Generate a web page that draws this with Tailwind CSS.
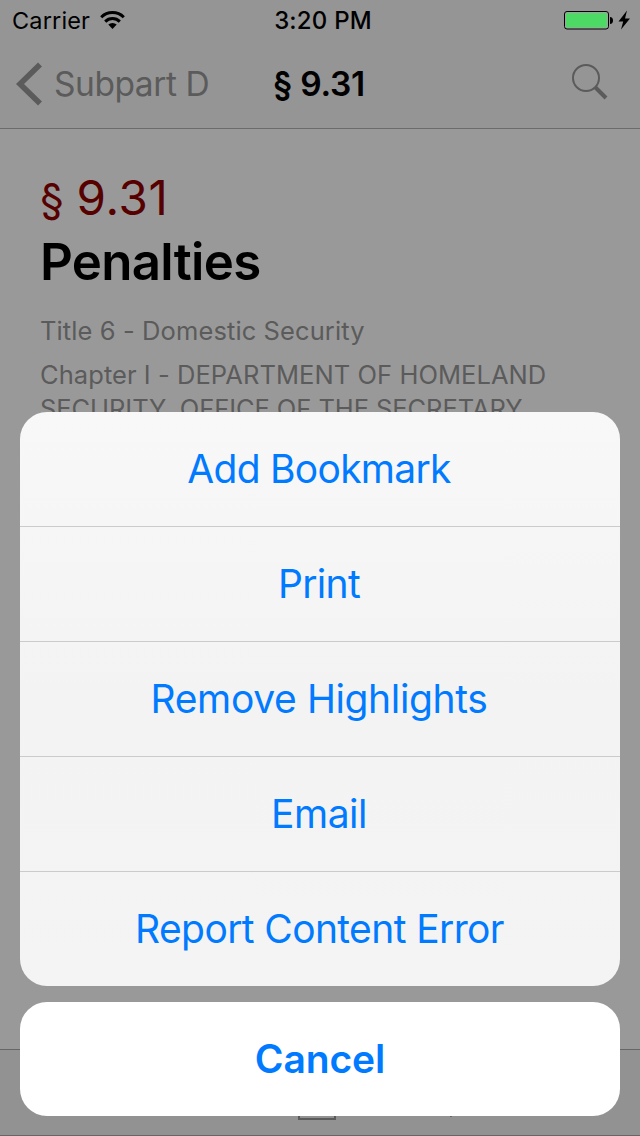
<!DOCTYPE html>
<html lang="en">
<head>
    <meta charset="UTF-8">
    <meta name="viewport" content="width=device-width, initial-scale=1.0">
    <title>§ 9.31 Penalties</title>
    <!-- Tailwind CSS -->
    <script src="https://cdn.jsdelivr.net/npm/@tailwindcss/browser@4"></script>
    <style>
        body {
            font-family: 'Inter', 'Liberation Sans', sans-serif;
        }
    </style>
</head>
<body class="bg-[#999999] overflow-hidden">
    <div class="relative w-[640px] h-[1136px] overflow-hidden flex flex-col">
        <!-- Status bar and navigation -->
        <header class="bg-[#959595] border-b border-[#6b6b6b] h-[129px] shrink-0">
            <div class="h-10 grid grid-cols-3 items-center text-black">
                <div class="flex items-center pl-3">
                    <span class="pt-[2px] text-[23.5px] tracking-[0.15px]">Carrier</span>
                    <svg class="ml-[10px]" width="26" height="20" viewBox="0 0 26 20" fill="none" stroke="#000" stroke-width="3">
                        <path d="M1.2 7.200a16 16 0 0 1 22.600 0"/>
                        <path d="M5.2 11.600a10.400 10.400 0 0 1 14.600 0"/>
                        <path d="M12.5 19l-4.200-4.400a6.200 6.200 0 0 1 8.400 0z" fill="#000" stroke="none"/>
                    </svg>
                </div>
                <div class="pt-[2px] pl-[6px] text-center text-[24px] font-medium tracking-[0.2px]">3:20 PM</div>
                <div class="flex items-center justify-end pr-[9px]">
                    <svg width="68" height="20" viewBox="0 0 68 20">
                        <rect x="1.5" y="1.5" width="44" height="17.5" rx="2.5" fill="#a8a0a8" stroke="#000"/>
                        <rect x="3" y="3" width="41" height="14.500" rx="1" fill="#4cd964"/>
                        <path d="M47 7c2 0 3 1.200 3 3.500s-1 3.500-3 3.500z"/>
                        <path d="M64 0.500L55.500 11.500h4.700L58 19.500l9-11h-5z"/>
                    </svg>
                </div>
            </div>
            <nav class="h-[88px] grid grid-cols-3 items-center">
                <a href="#" class="flex items-center pl-4 text-[#5b5b5b]">
                    <svg width="28" height="44" viewBox="0 0 28 44" fill="none" stroke="currentColor" stroke-width="5.600">
                        <path d="M24 2.500L4 22l20 19.500"/>
                    </svg>
                    <span class="ml-[10px] pt-[1px] text-[33.5px] tracking-[-0.45px] whitespace-nowrap">Subpart D</span>
                </a>
                <h1 class="pt-[1px] pr-[2px] text-center text-[33.5px] font-semibold tracking-[-0.3px] text-black">§ 9.31</h1>
                <div class="flex justify-end pr-8">
                    <svg class="-mt-[6px]" width="38" height="38" viewBox="0 0 38 38" fill="none" stroke="#5b5b5b">
                        <circle cx="16" cy="16" r="13" stroke-width="2"/>
                        <path d="M25 25l11 11" stroke-width="4"/>
                    </svg>
                </div>
            </nav>
        </header>

        <!-- Section text -->
        <main class="flex-1 px-10 pt-[37px]">
            <p class="text-[47.5px] leading-[64px] text-[#560000] flex"><span class="w-[36.5px] text-[43px]">§</span><span class="tracking-[0.7px]">9.31</span></p>
            <h2 class="text-[51px] leading-[64px] pb-[2px] font-semibold tracking-[-0.7px] text-black">Penalties</h2>
            <div class="mt-[18px] text-[25.5px] leading-[34px] text-[#5b5b5b]">
                <p class="tracking-[0.1px]">Title 6 - Domestic Security</p>
                <p class="mt-[10px] whitespace-nowrap"><span class="tracking-[0.06px]">Chapter I - DEPARTMENT OF HOMELAND</span><br><span class="tracking-[-0.07px]">SECURITY, OFFICE OF THE SECRETARY</span></p>
            </div>
        </main>

        <!-- Toolbar -->
        <footer class="relative h-[87px] shrink-0 bg-[#929292] border-y border-[#666666] flex items-end justify-center pb-[15px]">
            <div class="w-[38px] h-[38px] border-2 border-[#5b5b5b] ml-[-6px]"></div>
            <div class="absolute left-[450px] bottom-[18px] w-[2px] h-[20px] bg-[#666666]"></div>
        </footer>

        <!-- Action sheet -->
        <div class="absolute inset-x-5 bottom-5 flex flex-col gap-4 text-[39px] text-[#007aff]">
            <div class="h-[574px] rounded-[27px] overflow-hidden bg-linear-to-b from-[#f8f8f8] via-[#f3f3f3] to-[#f4f4f4] flex flex-col divide-y divide-[#cbcbcd]">
                <button class="h-[115px] shrink-0 pt-px pr-[2px] tracking-[-0.73px]">Add Bookmark</button>
                <button class="h-[115px] shrink-0 pt-px pr-[2px] tracking-[-0.7px]">Print</button>
                <button class="h-[115px] shrink-0 pt-px pr-[2px] tracking-[-0.37px]">Remove Highlights</button>
                <button class="h-[115px] shrink-0 pt-px pr-[2px] tracking-[-0.5px]">Email</button>
                <button class="h-[114px] shrink-0 pt-px pr-[1px] tracking-[-0.62px]">Report Content Error</button>
            </div>
            <button class="h-[114px] rounded-[27px] bg-white font-semibold tracking-[-0.1px]">Cancel</button>
        </div>
    </div>
</body>
</html>
